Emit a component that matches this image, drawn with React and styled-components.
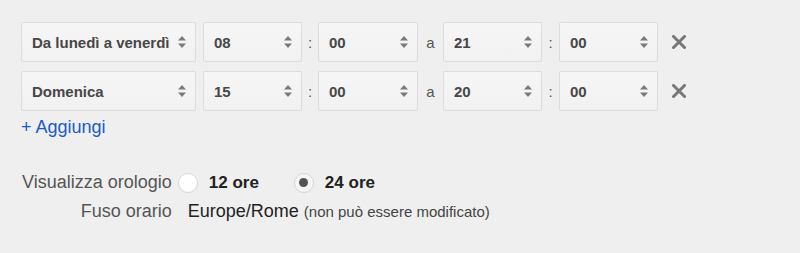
import styled, { createGlobalStyle } from "styled-components";

const GlobalStyle = createGlobalStyle`
  html, body {
    margin: 0;
    padding: 0;
    background: #efefef;
    font-family: "Liberation Sans", Arial, sans-serif;
  }
`;

const rows = [
  { day: "Da lunedì a venerdì", from: ["08", "00"], to: ["21", "00"] },
  { day: "Domenica", from: ["15", "00"], to: ["20", "00"] },
];

function Arrows() {
  return (
    <ArrowIcon width="10" height="16" viewBox="0 0 10 16">
      <path d="M1 6.5 L5 2 L9 6.5 Z" fill="#7a7a7a" />
      <path d="M1 9.5 L5 14 L9 9.5 Z" fill="#7a7a7a" />
    </ArrowIcon>
  );
}

function Select({ value, width }) {
  return (
    <SelectBox $width={width}>
      <Value>{value}</Value>
      <Arrows />
    </SelectBox>
  );
}

function RemoveIcon() {
  return (
    <Remove width="14" height="14" viewBox="0 0 14 14">
      <path
        d="M1.5 1.5 L12.5 12.5 M12.5 1.5 L1.5 12.5"
        stroke="#777"
        strokeWidth="3"
        strokeLinecap="square"
      />
    </Remove>
  );
}

export default function App() {
  return (
    <>
      <GlobalStyle />
      <Page>
        <Schedule>
          {rows.map((row) => (
            <Row key={row.day}>
              <Select value={row.day} width={175} />
              <Sep $width={7} />
              <Select value={row.from[0]} width={99} />
              <Sep $width={16}>:</Sep>
              <Select value={row.from[1]} width={100} />
              <Sep $width={25}>a</Sep>
              <Select value={row.to[0]} width={99} />
              <Sep $width={17}>:</Sep>
              <Select value={row.to[1]} width={99} />
              <RemoveIcon />
            </Row>
          ))}
        </Schedule>
        <AddLink href="#">+ Aggiungi</AddLink>
        <Settings>
          <Label>Visualizza orologio</Label>
          <Options>
            <Option>
              <Radio />
              <OptionText>12 ore</OptionText>
            </Option>
            <Option>
              <Radio $checked />
              <OptionText>24 ore</OptionText>
            </Option>
          </Options>
          <Label>Fuso orario</Label>
          <Zone>
            Europe/Rome <Note>(non può essere modificato)</Note>
          </Zone>
        </Settings>
      </Page>
    </>
  );
}

const Page = styled.div`
  width: 800px;
  height: 253px;
  box-sizing: border-box;
  padding: 22px 0 0 21px;
  background: #efefef;
`;

const Schedule = styled.div`
  display: flex;
  flex-direction: column;
  gap: 9px;
`;

const Row = styled.div`
  display: flex;
  align-items: center;
`;

const SelectBox = styled.div`
  width: ${(p) => p.$width}px;
  height: 40px;
  box-sizing: border-box;
  display: flex;
  align-items: center;
  justify-content: space-between;
  padding: 0 8px 0 10px;
  border: 1px solid #dcdcdc;
  border-radius: 2px;
  background: linear-gradient(#f6f6f6, #f1f1f1);
`;

const Value = styled.span`
  font-size: 15px;
  font-weight: bold;
  color: #474747;
`;

const ArrowIcon = styled.svg`
  display: block;
  flex: none;
`;

const Sep = styled.span`
  width: ${(p) => p.$width}px;
  text-align: center;
  font-size: 15px;
  color: #555;
`;

const Remove = styled.svg`
  display: block;
  margin-left: 14px;
`;

const AddLink = styled.a`
  display: inline-block;
  margin-top: 6px;
  font-size: 18px;
  line-height: 21px;
  color: #1a5acb;
  text-decoration: none;
`;

const Settings = styled.div`
  display: grid;
  grid-template-columns: auto auto;
  justify-content: start;
  align-items: center;
  grid-auto-rows: 29px;
  column-gap: 6px;
  margin-top: 30px;
  margin-left: 1px;
`;

const Label = styled.div`
  text-align: right;
  font-size: 18px;
  color: #555;
`;

const Options = styled.div`
  display: flex;
  align-items: center;
  gap: 35px;
`;

const Option = styled.div`
  display: flex;
  align-items: center;
  gap: 11px;
`;

const Radio = styled.span`
  width: 20px;
  height: 20px;
  box-sizing: border-box;
  border-radius: 50%;
  border: 1px solid #d6d6d6;
  background: ${(p) => (p.$checked ? "#f6f6f6" : "#fff")};
  display: flex;
  align-items: center;
  justify-content: center;

  &::after {
    content: "";
    display: ${(p) => (p.$checked ? "block" : "none")};
    width: 9px;
    height: 9px;
    border-radius: 50%;
    background: #555;
  }
`;

const OptionText = styled.span`
  font-size: 17px;
  font-weight: bold;
  color: #222;
`;

const Zone = styled.div`
  padding-left: 10px;
  font-size: 18px;
  color: #222;
`;

const Note = styled.span`
  font-size: 15px;
  color: #444;
`;
